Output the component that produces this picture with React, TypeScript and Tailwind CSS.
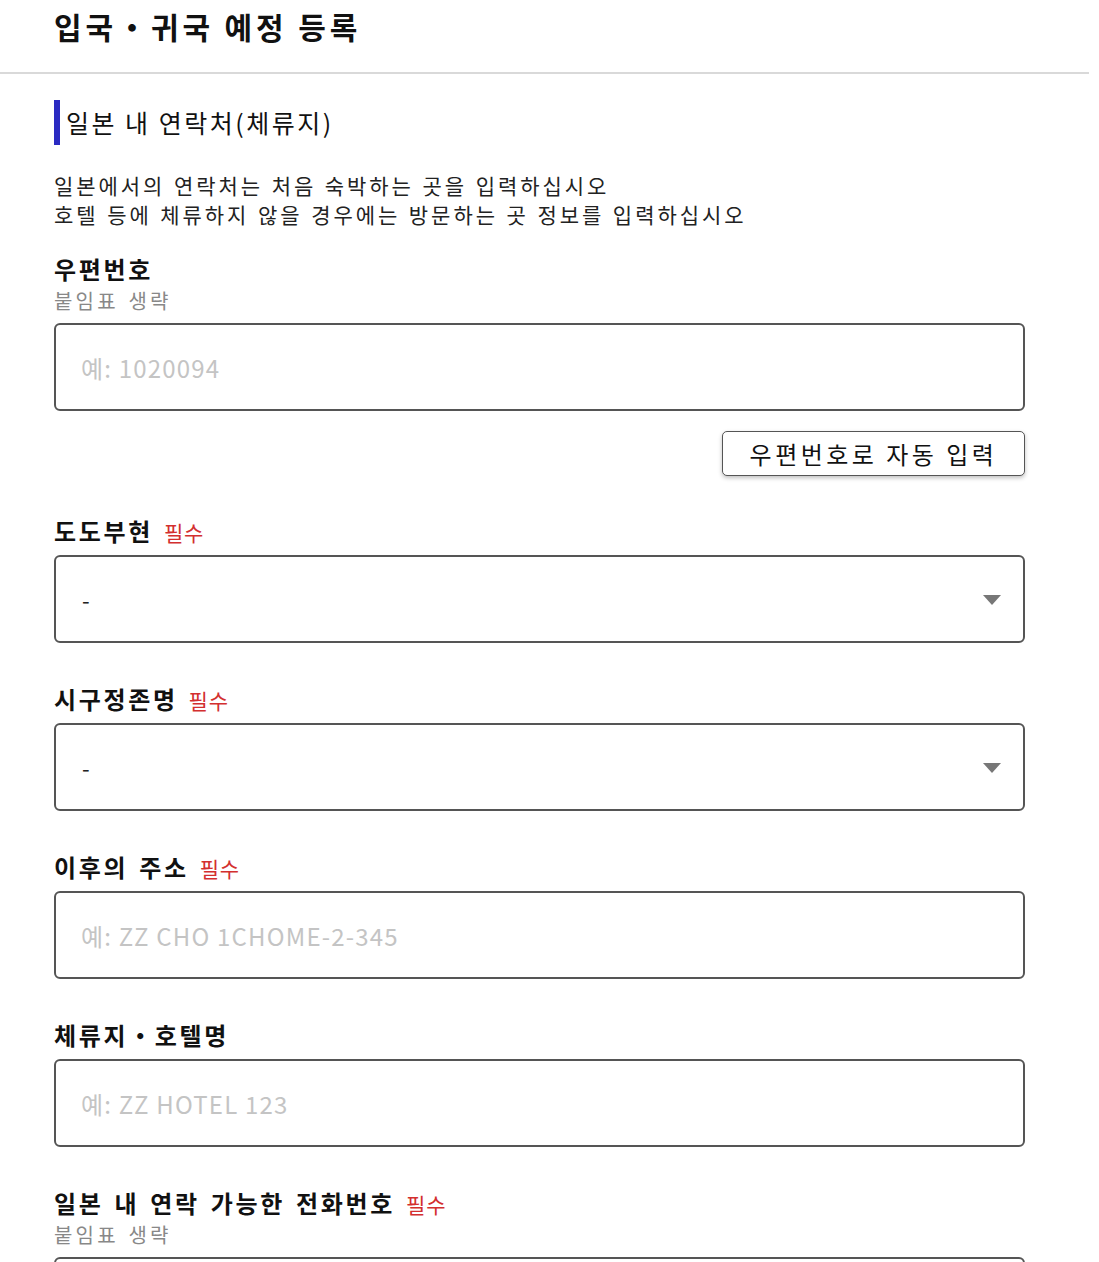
import React from 'react';

const font = { fontFamily: '"Noto Sans CJK KR", "Noto Sans", sans-serif' };

const Required = () => (
  <span className="ml-[11px] text-[21px] font-normal leading-none tracking-[0.04em] text-[#d32f2f] [word-spacing:0]">
    필수
  </span>
);

const Label: React.FC<{ text: string; required?: boolean; sub?: string }> = ({ text, required, sub }) => (
  <div className="mb-[8px]">
    <div className="h-[32px] text-[24px] font-bold leading-[32px] tracking-[0.11em] text-[#111] [word-spacing:3px]">
      {text}
      {required && <Required />}
    </div>
    {sub && (
      <div className="pt-[2px] text-[20px] leading-[28px] tracking-[0.16em] text-[#888] [word-spacing:2px]">{sub}</div>
    )}
  </div>
);

const TextInput: React.FC<{ placeholder?: string }> = ({ placeholder }) => (
  <input
    type="text"
    placeholder={placeholder}
    className="h-[88px] w-full rounded-[6px] border-2 border-[#555] bg-white px-[25px] text-[24px] tracking-[0.05em] text-[#222] outline-none placeholder:text-[#c4c4c4]"
  />
);

const SelectBox = () => (
  <div className="relative h-[88px] w-full rounded-[6px] border-2 border-[#555] bg-white">
    <div className="flex h-full items-center px-[26px] text-[22px] text-[#222]">-</div>
    <svg className="absolute right-[22px] top-[38px]" width="18" height="10" viewBox="0 0 18 10">
      <path d="M0 0 L18 0 L9 10 Z" fill="#777" />
    </svg>
  </div>
);

export default function App() {
  return (
    <div className="min-h-screen bg-white" style={font}>
      <header className="w-[1089px] border-b-2 border-[#d9d9d9]">
        <h1 className="px-[54px] pb-[24px] pt-[4px] text-[30px] font-bold leading-[44px] tracking-[0.13em] text-[#111]">
          입국・귀국 예정 등록
        </h1>
      </header>

      <main className="w-[1025px] pl-[54px] pt-[26px]">
        <h2 className="flex h-[45px] items-center border-l-[6px] border-[#2a2ac2] pl-[6px] text-[25px] leading-[45px] tracking-[0.1em] text-[#111]">
          일본 내 연락처(체류지)
        </h2>

        <p className="mt-[26px] text-[21px] leading-[29px] tracking-[0.14em] text-[#222] [word-spacing:1px]">
          일본에서의 연락처는 처음 숙박하는 곳을 입력하십시오
          <br />
          호텔 등에 체류하지 않을 경우에는 방문하는 곳 정보를 입력하십시오
        </p>

        <div className="mt-[24px]">
          <Label text="우편번호" sub="붙임표 생략" />
          <TextInput placeholder="예: 1020094" />
          <div className="mt-[20px] flex justify-end">
            <button className="h-[45px] w-[303px] rounded-[5px] border-[1.5px] border-[#555] bg-white text-[24px] tracking-[0.145em] text-[#111] shadow-[0_2px_4px_rgba(0,0,0,0.25)]">
              우편번호로 자동 입력
            </button>
          </div>
        </div>

        <div className="mt-[39px]">
          <Label text="도도부현" required />
          <SelectBox />
        </div>

        <div className="mt-[40px]">
          <Label text="시구정존명" required />
          <SelectBox />
        </div>

        <div className="mt-[40px]">
          <Label text="이후의 주소" required />
          <TextInput placeholder="예: ZZ CHO 1CHOME-2-345" />
        </div>

        <div className="mt-[40px]">
          <Label text="체류지・호텔명" />
          <TextInput placeholder="예: ZZ HOTEL 123" />
        </div>

        <div className="mt-[40px]">
          <Label text="일본 내 연락 가능한 전화번호" required sub="붙임표 생략" />
          <TextInput placeholder="예: 09012345678" />
        </div>
      </main>
    </div>
  );
}
